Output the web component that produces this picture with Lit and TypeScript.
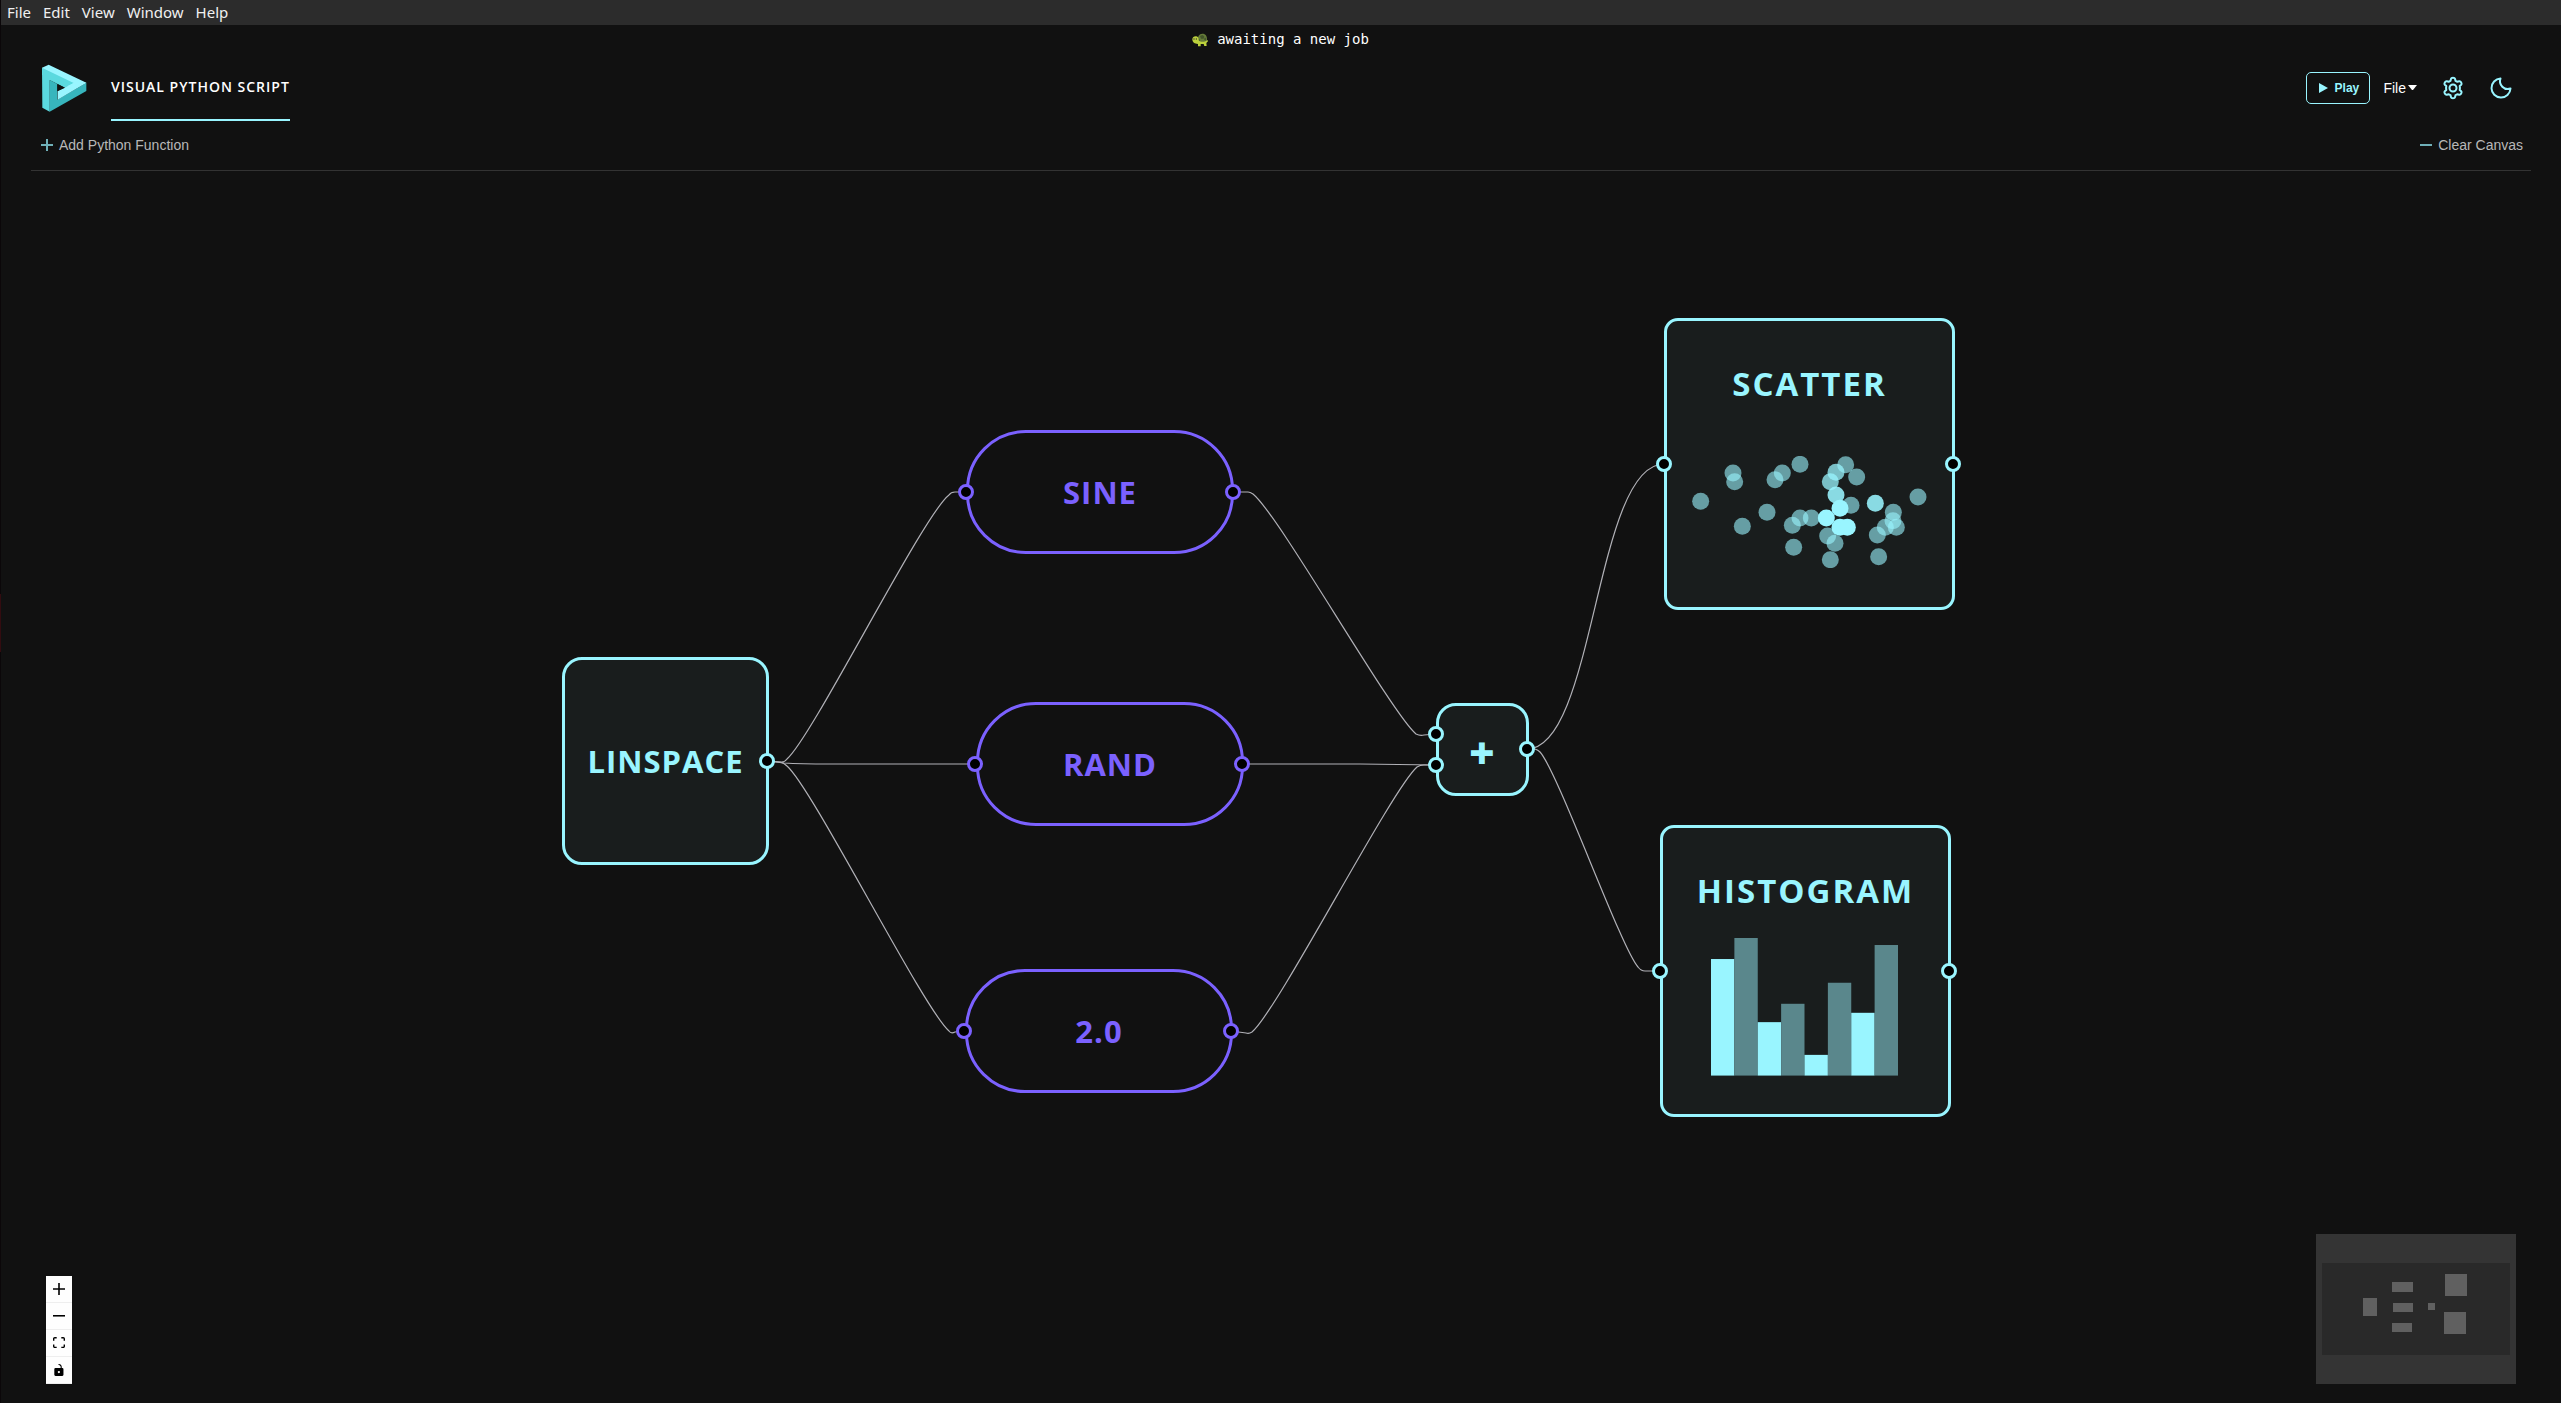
import { LitElement, html, css, svg } from "lit";
import { customElement, state } from "lit/decorators.js";
import { classMap } from "lit/directives/class-map.js";
import { styleMap } from "lit/directives/style-map.js";

type Kind = "source" | "function" | "operator" | "plot";

interface GraphNode {
  id: string;
  label: string;
  kind: Kind;
  x: number;
  y: number;
  w: number;
  h: number;
  ports: [number, number][];
}

const NODES: GraphNode[] = [
  { id: "linspace", label: "LINSPACE", kind: "source", x: 562, y: 657, w: 207, h: 208, ports: [[767, 761]] },
  { id: "sine", label: "SINE", kind: "function", x: 966, y: 430, w: 268, h: 124, ports: [[966, 492], [1233, 492]] },
  { id: "rand", label: "RAND", kind: "function", x: 976, y: 702, w: 268, h: 124, ports: [[975, 764], [1242, 764]] },
  { id: "constant", label: "2.0", kind: "function", x: 965, y: 969, w: 268, h: 124, ports: [[964, 1031], [1231, 1031]] },
  { id: "add", label: "+", kind: "operator", x: 1436, y: 703, w: 93, h: 93, ports: [[1436, 734], [1436, 765], [1527, 749]] },
  { id: "scatter", label: "SCATTER", kind: "plot", x: 1664, y: 318, w: 291, h: 292, ports: [[1664, 464], [1953, 464]] },
  { id: "histogram", label: "HISTOGRAM", kind: "plot", x: 1660, y: 825, w: 291, h: 292, ports: [[1660, 971], [1949, 971]] },
];

const EDGES = [
  "M767 761 L780 762 Q784 763 787 759 C813 736 923 515 949 495 Q951 492 955 492 H966",
  "M767 761 L784 763 Q800 764 830 764 H975",
  "M767 761 L780 762 Q784 763 787 766 C813 789 923 1008 949 1031 Q951 1034 955 1032 L964 1031",
  "M1233 492 H1248 Q1250 492 1253 494 C1279 515 1391 713 1416 734 Q1420 736 1424 735 L1436 734",
  "M1242 764 H1360 L1436 765",
  "M1231 1031 L1246 1033 Q1249 1034 1252 1032 C1278 1010 1391 790 1417 767 Q1420 765 1424 765 H1436",
  "M1527 749 C1595 749 1595 464 1664 464",
  "M1527 749 H1535 Q1538 750 1540 752 C1558 772 1621 948 1638 967 Q1641 971 1645 971 H1659",
];

const DOTS: [number, number, number][] = [
  [279, 549, 60], [284, 575, 60], [182, 634, 60], [307, 709, 60], [381, 667, 60],
  [405, 569, 60], [427, 549, 60], [480, 523, 60], [480, 684, 60], [514, 684, 60],
  [457, 706, 60], [461, 772, 60], [617, 524, 60], [650, 561, 60], [633, 646, 60],
  [563, 738, 60], [585, 760, 60], [571, 809, 60], [760, 667, 60], [759, 692, 60],
  [736, 712, 60], [769, 712, 60], [712, 735, 60], [716, 800, 60], [834, 621, 60],
  [588, 547, 75], [571, 575, 75], [588, 615, 88], [706, 640, 88],
  [600, 655, 100], [559, 684, 100], [600, 712, 100], [622, 712, 100],
];

const BAR_HEIGHTS = [349, 412, 160, 215, 62, 278, 188, 391];

const MINIMAP: [number, number, number, number][] = [
  [47, 64, 14, 18], [76, 48, 21, 10], [77, 69, 20, 9], [76, 89, 20, 9],
  [112, 69, 7, 7], [129, 40, 22, 22], [128, 78, 22, 22],
];

const scatterArt = html`
  <svg class="scatter-art" viewBox="156 498 705 337" aria-hidden="true">
    ${DOTS.map(([x, y, a]) => svg`<circle cx=${x} cy=${y} r="25.5" fill="#99f5ff" fill-opacity=${a / 100}></circle>`)}
  </svg>`;

const histogramArt = html`
  <svg class="histogram-art" viewBox="0 0 560 412" aria-hidden="true">
    ${BAR_HEIGHTS.map((h, i) => svg`<rect x=${i * 70} y=${412 - h} width="70" height=${h} fill=${i % 2 ? "#5a878c" : "#99f5ff"}></rect>`)}
  </svg>`;

@customElement("flow-canvas")
export class FlowCanvas extends LitElement {
  static styles = css`
    :host { display: block; position: relative; overflow: hidden; }
    .viewport { position: absolute; inset: 0; transform: translate(0, -171px); }
    .edges { position: absolute; left: 0; top: 0; width: 100%; height: 100%; overflow: visible; fill: none; stroke: #b1b1b7; stroke-width: 1.2; }
    .node {
      position: absolute; box-sizing: border-box; display: flex; align-items: center; justify-content: center;
      border: 3px solid #99f5ff; background: #191d1d; color: #99f5ff;
      font: 700 31px/40px "Open Sans", "Noto Sans", sans-serif; letter-spacing: 1px;
    }
    .source { border-radius: 20px; }
    .function { border-radius: 60px; border-color: #7b61ff; color: #7b61ff; background: #111; }
    .operator { padding-top: 4px; border-radius: 20px; font-size: 44px; font-weight: 800; }
    .plot { flex-direction: column; justify-content: flex-start; padding-top: 43px; border-radius: 14px; font-size: 33px; letter-spacing: 2px; }
    .scatter-art { width: 235px; margin-top: 52px; }
    .histogram-art { width: 187px; margin: 27px 2px 0 0; }
    .port { position: absolute; box-sizing: border-box; width: 16px; height: 16px; margin: -8px 0 0 -8px; border: 3px solid #99f5ff; border-radius: 50%; background: #000; }
    .port-function { border-color: #7b61ff; }
    .controls { position: absolute; left: 46px; bottom: 19px; display: flex; flex-direction: column; box-shadow: 0 0 2px 1px rgba(0, 0, 0, 0.08); }
    .controls button { box-sizing: content-box; display: flex; align-items: center; justify-content: center; width: 16px; height: 16px; padding: 5px; border: 0; border-bottom: 1px solid #eee; background: #fefefe; }
    .controls svg { width: 12px; max-height: 12px; fill: #000; }
    .minimap { position: absolute; right: 45px; bottom: 19px; width: 200px; height: 150px; background: #343434; }
  `;

  private art(id: string) {
    if (id === "scatter") return scatterArt;
    if (id === "histogram") return histogramArt;
    return null;
  }

  render() {
    return html`
      <div class="viewport">
        <svg class="edges" aria-hidden="true">${EDGES.map((d) => svg`<path d=${d}></path>`)}</svg>
        ${NODES.map(
          (n) => html`
            <div class="node ${n.kind}" style=${styleMap({ left: `${n.x}px`, top: `${n.y}px`, width: `${n.w}px`, height: `${n.h}px` })}>
              <span>${n.label}</span>
              ${this.art(n.id)}
            </div>
            ${n.ports.map(
              ([x, y]) => html`<i class=${classMap({ port: true, "port-function": n.kind === "function" })} style=${styleMap({ left: `${x}px`, top: `${y}px` })}></i>`
            )}
          `
        )}
      </div>
      <div class="controls">
        <button aria-label="Zoom in"><svg viewBox="0 0 32 32"><path d="M32 18.133H18.133V32h-4.266V18.133H0v-4.266h13.867V0h4.266v13.867H32z"></path></svg></button>
        <button aria-label="Zoom out"><svg viewBox="0 0 32 5"><path d="M0 0h32v4.2H0z"></path></svg></button>
        <button aria-label="Fit view"><svg viewBox="0 0 32 30"><path d="M3.692 4.63c0-.53.4-.938.939-.938h5.215V0H4.708C2.13 0 0 2.054 0 4.63v5.216h3.692V4.631zM27.354 0h-5.2v3.692h5.17c.53 0 .984.4.984.939v5.215H32V4.631A4.624 4.624 0 0027.354 0zm.954 24.83c0 .532-.4.94-.939.94h-5.215v3.768h5.215c2.577 0 4.631-2.13 4.631-4.707v-5.139h-3.692v5.139zm-23.677.94c-.531 0-.939-.4-.939-.94v-5.138H0v5.139c0 2.577 2.13 4.707 4.708 4.707h5.138V25.77H4.631z"></path></svg></button>
        <button aria-label="Toggle interactivity"><svg viewBox="0 0 25 32"><path d="M21.333 10.667H19.81V7.619C19.81 3.429 16.38 0 12.19 0c-4.114 1.828-1.37 2.133.305 2.438 1.676.305 4.42 2.59 4.42 5.181v3.048H3.047A3.056 3.056 0 000 13.714v15.238A3.056 3.056 0 003.048 32h18.285a3.056 3.056 0 003.048-3.048V13.714a3.056 3.056 0 00-3.048-3.047zM12.19 24.533a3.056 3.056 0 01-3.047-3.047 3.056 3.056 0 013.047-3.048 3.056 3.056 0 013.048 3.048 3.056 3.056 0 01-3.048 3.047z"></path></svg></button>
      </div>
      <svg class="minimap" viewBox="0 0 200 150" aria-hidden="true">
        <rect x="6" y="29" width="188" height="92" fill="#292929"></rect>
        ${MINIMAP.map(([x, y, w, h]) => svg`<rect x=${x} y=${y} width=${w} height=${h} fill="#606060"></rect>`)}
      </svg>
    `;
  }
}

@customElement("app-root")
export class AppRoot extends LitElement {
  static styles = css`
    :host { display: flex; flex-direction: column; position: relative; min-height: 100vh; background: #111; color: #fff; font: 14px/20px "Liberation Sans", Arial, sans-serif; }
    :host::before { content: ""; position: absolute; left: 0; top: 0; bottom: 0; width: 1px; background: linear-gradient(#0b0709 0 594px, #330c10 594px 652px, #0b0709 652px); z-index: 1; }
    button { margin: 0; padding: 0; border: 0; background: none; color: inherit; font: inherit; }
    svg { display: block; }
    .menubar { display: flex; gap: 12px; height: 25px; padding-left: 7px; background: #2c2c2c; color: #f0f0f0; font: 15px/25px "Noto Sans", sans-serif; }
    .status { display: flex; justify-content: center; align-items: center; gap: 9px; height: 29px; font: 14px/29px "DejaVu Sans Mono", monospace; }
    .turtle { width: 16px; height: 14px; }
    .header { display: flex; align-items: center; height: 67px; padding: 0 48px 0 41px; }
    .logo { width: 46px; height: 48px; }
    .tab { display: flex; align-items: center; align-self: stretch; margin-left: 24px; border-bottom: 2px solid #99f5ff; color: #fff; text-decoration: none; font: 600 14px/20px "Open Sans", "Noto Sans", sans-serif; letter-spacing: 1px; }
    .actions { display: flex; align-items: center; margin-left: auto; }
    .play { display: flex; align-items: center; justify-content: center; gap: 7px; box-sizing: border-box; width: 64px; height: 32px; border: 1px solid #99f5ff; border-radius: 5px; color: #99f5ff; font-size: 12px; font-weight: 700; }
    .file { display: flex; align-items: center; gap: 2px; margin-left: 13px; }
    .gear { margin-left: 24px; color: #99f5ff; }
    .moon { margin-left: 24px; color: #99f5ff; }
    .line-icon { width: 24px; height: 24px; fill: none; stroke: currentColor; stroke-width: 2; stroke-linejoin: round; stroke-linecap: round; }
    .toolbar { display: flex; justify-content: space-between; align-items: center; box-sizing: border-box; height: 50px; margin: 0 30px 0 31px; padding: 0 8px 2px 10px; border-bottom: 1px solid #333; color: #b8b8b8; }
    .tool { display: flex; align-items: center; gap: 6px; }
    .tool svg { width: 12px; height: 12px; stroke: #70b0b8; stroke-width: 2; }
    flow-canvas { flex: 1; }
  `;

  @state() private menus = ["File", "Edit", "View", "Window", "Help"];

  render() {
    return html`
      <nav class="menubar">${this.menus.map((m) => html`<button>${m}</button>`)}</nav>
      <div class="status">
        <svg class="turtle" viewBox="0 0 48 42" aria-hidden="true">
          <path d="M18 26C15 10 22 2 31 2c10 0 15 8 14 19l3 3-4 4-24 2z" fill="#647a38"></path>
          <path d="M24 9l7-3 6 4-2 7h-8zM39 13l4 5-3 5-4-4zM20 18l4 2-1 5h-4z" fill="#42552a"></path>
          <path d="M1 19C1 11 8 9 13 10c6 1 7 7 7 12 6 6 16 6 26 0l2 2-5 6 1 9h-7l-2-6h-9v7h-8v-7C8 33 1 28 1 19z" fill="#bcd13c"></path>
          <circle cx="6" cy="18" r="2" fill="#333"></circle>
          <circle cx="13" cy="18" r="2" fill="#333"></circle>
        </svg>
        <span>awaiting a new job</span>
      </div>
      <header class="header">
        <svg class="logo" viewBox="124 190 138 144" aria-hidden="true">
          <path d="M127 201L147 192L260 246L222 266L127 222z" fill="#99f5ff"></path>
          <path d="M150 238L196 262L173 250V297L260 246V271L150 333z" fill="#37b5bd"></path>
          <path d="M127 201L222 247L196 261L150 238V333L128 321z" fill="#5bd9df"></path>
          <path d="M222 247L260 246L174 297V271z" fill="#99f5ff"></path>
          <path d="M173 250L196 261L173 272z" fill="#111"></path>
        </svg>
        <a class="tab" href="#script">VISUAL PYTHON SCRIPT</a>
        <div class="actions">
          <button class="play">
            <svg width="10" height="12" viewBox="0 0 10 12" fill="#99f5ff"><path d="M1 1L10 6L1 11z"></path></svg>
            Play
          </button>
          <button class="file">File<svg width="9" height="5" viewBox="0 0 9 5" fill="#fff"><path d="M0 0H9L5 5H4z"></path></svg></button>
          <button class="gear" aria-label="Settings">
            <svg class="line-icon" viewBox="0 0 24 24">
              <path d="M10 2.8C10.2 2 11 1.8 12 1.8s1.8.2 2 1l.5 2c.6.3 1.2.6 1.7 1l2-.6c.9-.2 1.5.3 2 1.2s.6 1.7 0 2.3L18.7 10.1a8 8 0 0 1 0 3.8l1.5 1.4c.6.6.5 1.4 0 2.3s-1.1 1.4-2 1.2l-2-.6c-.5.4-1.1.7-1.7 1l-.5 2c-.2.8-1 1-2 1s-1.8-.2-2-1l-.5-2c-.6-.3-1.2-.6-1.7-1l-2 .6c-.9.2-1.5-.3-2-1.2s-.6-1.7 0-2.3l1.5-1.4a8 8 0 0 1 0-3.8L3.8 8.7c-.6-.6-.5-1.4 0-2.3s1.1-1.4 2-1.2l2 .6c.5-.4 1.1-.7 1.7-1z"></path>
              <circle cx="12" cy="12" r="3.5"></circle>
            </svg>
          </button>
          <button class="moon" aria-label="Dark mode">
            <svg class="line-icon" viewBox="0 0 24 24"><path d="M11.5 2.5A9.5 9.5 0 1 0 21.5 12.5A7.8 7.8 0 0 1 11.5 2.5z"></path></svg>
          </button>
        </div>
      </header>
      <div class="toolbar">
        <button class="tool"><svg viewBox="0 0 12 12"><path d="M0 6H12M6 0V12"></path></svg>Add Python Function</button>
        <button class="tool"><svg viewBox="0 0 12 12"><path d="M0 6H12"></path></svg>Clear Canvas</button>
      </div>
      <flow-canvas></flow-canvas>
    `;
  }
}
